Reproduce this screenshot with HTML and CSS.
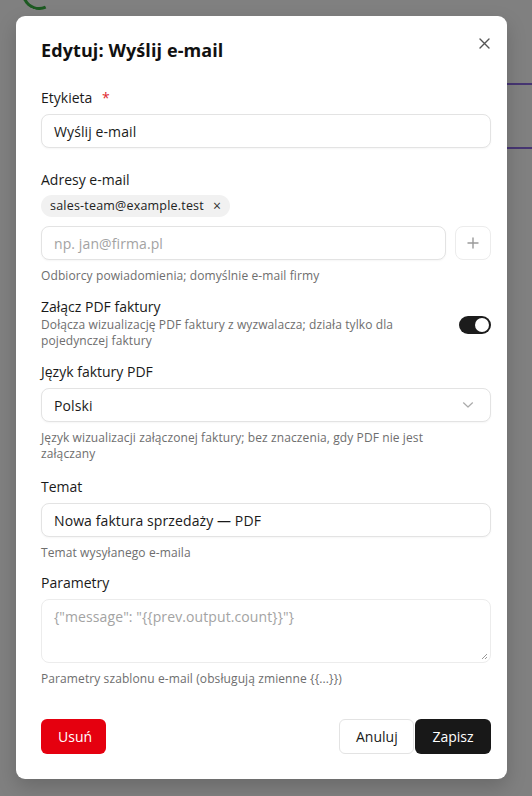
FILE: index.html
```html
<!DOCTYPE html>
<html lang="pl">
<head>
<meta charset="utf-8">
<title>Edytuj: Wyślij e-mail</title>
<link rel="stylesheet" href="styles.css">
</head>
<body>
<div class="backdrop">
  <div class="bg-arc"></div>
  <div class="bg-line bg-line-1"></div>
  <div class="bg-line bg-line-2"></div>
</div>
<div class="overlay">
  <div class="modal">
    <div class="modal-head">
      <h2 class="title">Edytuj: Wyślij e-mail</h2>
      <button class="close" aria-label="Zamknij">
        <svg width="11" height="11" viewBox="0 0 11 11"><path d="M1 1L10 10M10 1L1 10" stroke="#555" stroke-width="1.4" stroke-linecap="round"/></svg>
      </button>
    </div>

    <div class="field field-first">
      <label class="label">Etykieta <span class="req">*</span></label>
      <div class="input"><span class="value">Wyślij e-mail</span></div>
    </div>

    <div class="field field-wide">
      <label class="label">Adresy e-mail</label>
      <div class="chips">
        <span class="chip">sales-team@example.test <span class="chip-x">×</span></span>
      </div>
      <div class="add-row">
        <div class="input grow"><span class="placeholder">np. jan@firma.pl</span></div>
        <button class="add-btn" aria-label="Dodaj">
          <svg width="12" height="12" viewBox="0 0 12 12"><path d="M6 1V11M1 6H11" stroke="#9a9a9a" stroke-width="1.4" stroke-linecap="round"/></svg>
        </button>
      </div>
      <p class="help">Odbiorcy powiadomienia; domyślnie e-mail firmy</p>
    </div>

    <div class="field toggle-row">
      <div class="toggle-text">
        <div class="label">Załącz PDF faktury</div>
        <p class="desc">Dołącza wizualizację PDF faktury z wyzwalacza; działa tylko dla pojedynczej faktury</p>
      </div>
      <div class="switch"><span class="knob"></span></div>
    </div>

    <div class="field">
      <label class="label">Język faktury PDF</label>
      <div class="input select">
        <span class="value">Polski</span>
        <svg width="12" height="8" viewBox="0 0 12 8"><path d="M1.5 1.8L6 6L10.5 1.8" fill="none" stroke="#aaa" stroke-width="1.2" stroke-linecap="round" stroke-linejoin="round"/></svg>
      </div>
      <p class="help">Język wizualizacji załączonej faktury; bez znaczenia, gdy PDF nie jest załączany</p>
    </div>

    <div class="field field-subject">
      <label class="label">Temat</label>
      <div class="input"><span class="value">Nowa faktura sprzedaży — PDF</span></div>
      <p class="help">Temat wysyłanego e-maila</p>
    </div>

    <div class="field field-params">
      <label class="label">Parametry</label>
      <div class="textarea">
        <span class="placeholder">{"message": "{{prev.output.count}}"}</span>
        <svg class="grip" width="8" height="8" viewBox="0 0 8 8"><path d="M7 2L2 7M7 5L5 7" stroke="#999" stroke-width="1"/></svg>
      </div>
      <p class="help">Parametry szablonu e-mail (obsługują zmienne {{...}})</p>
    </div>

    <div class="footer">
      <button class="btn btn-danger">Usuń</button>
      <div class="footer-right">
        <button class="btn btn-outline">Anuluj</button>
        <button class="btn btn-dark">Zapisz</button>
      </div>
    </div>
  </div>
</div>
</body>
</html>
```
FILE: styles.css
```css
* { box-sizing: border-box; }
html, body { margin: 0; padding: 0; }
body {
  width: 532px;
  height: 796px;
  overflow: hidden;
  background: #808080;
  font-family: "Open Sans", "Noto Sans", sans-serif;
  color: #1a1a1a;
  position: relative;
}
.backdrop { position: absolute; inset: 0; }
.bg-arc {
  position: absolute;
  left: 22px;
  top: -24px;
  width: 34px;
  height: 34px;
  border-radius: 50%;
  border: 3px solid transparent;
  border-left-color: #1d5a22;
  border-bottom-color: #1d5a22;
  transform: rotate(20deg);
}
.bg-line {
  position: absolute;
  left: 500px;
  width: 40px;
  height: 2px;
  background: #463572;
}
.bg-line-1 { top: 83px; }
.bg-line-2 { top: 147px; }

.overlay {
  position: absolute;
  inset: 0;
  padding: 16px 25px 17px 16px;
}
.modal {
  width: 491px;
  height: 763px;
  background: #fff;
  border-radius: 9px;
  box-shadow: 0 8px 20px rgba(0,0,0,0.18);
  padding: 22px 16px 25px 25px;
  display: flex;
  flex-direction: column;
}
.modal-head {
  display: flex;
  justify-content: space-between;
  align-items: flex-start;
  height: 26px;
}
.title {
  margin: 0;
  font-size: 18px;
  font-weight: 700;
  line-height: 24px;
  letter-spacing: 0.1px;
  color: #111;
}
.close {
  border: 0;
  background: none;
  padding: 0;
  margin: -2px 0 0 0;
  width: 14px;
  height: 14px;
  display: flex;
  align-items: center;
  justify-content: center;
}

.field { display: flex; flex-direction: column; width: 450px; margin-top: 13px; }
.field-first { margin-top: 24px; }
.field-wide { margin-top: 22px; }
.field-subject { margin-top: 15px; }
.field-params { margin-top: 12px; }

.label {
  font-size: 14px;
  line-height: 20px;
  color: #1a1a1a;
  margin-bottom: 6px;
}
.req { color: #e0282e; margin-left: 6px; }

.input {
  height: 34px;
  border: 1px solid #e3e3e3;
  border-radius: 8px;
  padding: 0 12px;
  display: flex;
  align-items: center;
  font-size: 14px;
  letter-spacing: 0.1px;
  background: #fff;
  box-shadow: 0 1px 2px rgba(0,0,0,0.04);
}
.value { color: #1a1a1a; }
.placeholder { color: #a3a3a3; }
.grow { flex: 1; }

.chips { display: flex; margin: -1px 0 9px; }
.chip {
  height: 22px;
  background: #f1f1f1;
  border-radius: 11px;
  padding: 0 9px;
  font-size: 12.5px;
  line-height: 22px;
  letter-spacing: 0.2px;
  color: #222;
  display: inline-flex;
  align-items: center;
  gap: 9px;
}
.chip-x { font-size: 14px; color: #333; }

.add-row { display: flex; gap: 9px; }
.add-btn {
  width: 36px;
  height: 34px;
  border: 1px solid #ececec;
  border-radius: 8px;
  background: #fff;
  padding: 0;
  display: flex;
  align-items: center;
  justify-content: center;
}

.help {
  margin: 8px 0 0;
  max-width: 430px;
  font-size: 12px;
  line-height: 16px;
  letter-spacing: 0.1px;
  color: #6e6e6e;
}

.toggle-row {
  flex-direction: row;
  align-items: center;
  justify-content: space-between;
  margin-top: 13px;
}
.toggle-text { width: 400px; }
.toggle-row .label { margin-bottom: 0; }
.desc {
  margin: 0;
  font-size: 12px;
  line-height: 16px;
  letter-spacing: 0.1px;
  color: #6e6e6e;
}
.switch {
  width: 32px;
  height: 18px;
  border-radius: 9px;
  background: #1c1c1c;
  position: relative;
  margin-top: 3px;
}
.knob {
  position: absolute;
  right: 2px;
  top: 2px;
  width: 14px;
  height: 14px;
  border-radius: 50%;
  background: #fff;
}

.select { justify-content: space-between; padding-right: 16px; }

.textarea {
  height: 64px;
  border: 1px solid #ececec;
  border-radius: 8px;
  padding: 7px 12px;
  font-size: 14px;
  letter-spacing: 0.1px;
  position: relative;
}
.grip { position: absolute; right: 2px; bottom: 2px; }

.footer {
  margin-top: auto;
  width: 450px;
  display: flex;
  justify-content: space-between;
}
.footer-right { display: flex; gap: 1px; }
.btn {
  height: 35px;
  border-radius: 6px;
  font-family: inherit;
  font-size: 14px;
  padding: 0 16px;
  border: 1px solid transparent;
}
.btn-danger { background: #e5000f; color: #fff; width: 65px; }
.btn-outline { background: #fff; border-color: #e3e3e3; color: #1a1a1a; width: 75px; }
.btn-dark { background: #181818; color: #fff; width: 76px; }
```
